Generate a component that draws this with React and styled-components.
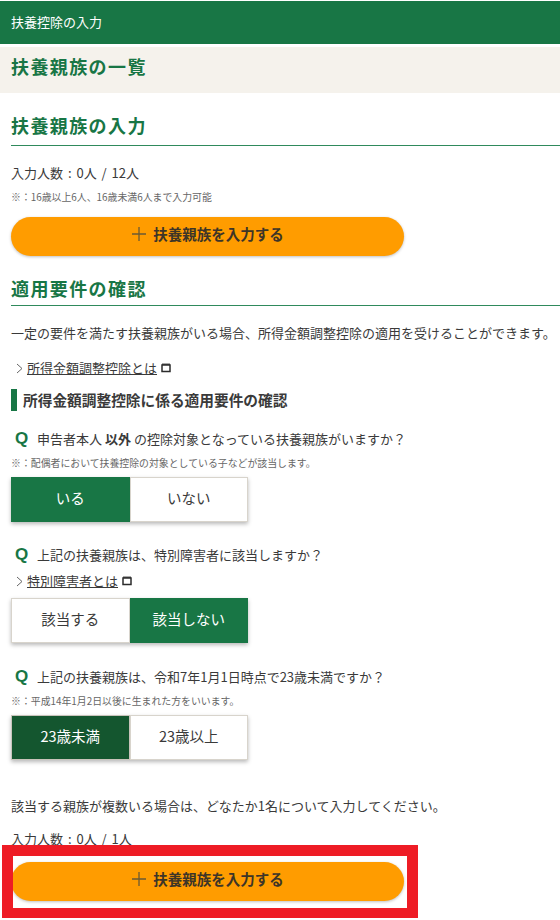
import React from 'react';
import styled, { createGlobalStyle } from 'styled-components';

const GREEN = '#187645';
const TEXT = '#3a3a3a';

const GlobalStyle = createGlobalStyle`
  html, body {
    margin: 0;
    padding: 0;
    background: #fff;
    overflow: hidden;
  }
  body {
    font-family: "Noto Sans CJK JP", "Noto Sans", sans-serif;
    color: ${TEXT};
  }
`;

const Page = styled.div`
  position: relative;
  width: 560px;
  height: 920px;
  overflow: hidden;
  padding-top: 1px;
  box-sizing: border-box;
`;

const TopBar = styled.header`
  height: 43px;
  background: ${GREEN};
  color: #fff;
  font-size: 13px;
  line-height: 41px;
  padding-left: 11px;
`;

const TitleBand = styled.div`
  margin-top: 3px;
  height: 46px;
  box-sizing: border-box;
  background: #f5f2ec;
  padding: 0 0 8px 11px;
  display: flex;
  align-items: center;
`;

const Title = styled.h1`
  margin: 0;
  font-size: 18px;
  letter-spacing: 1.4px;
  font-weight: 700;
  color: ${GREEN};
`;

const Content = styled.main`
  padding-left: 11px;
`;

const SectionHead = styled.h2`
  margin: ${(p) => p.$top}px 0 0;
  height: ${(p) => p.$height}px;
  box-sizing: border-box;
  border-bottom: 1px solid #2f8a5c;
  font-size: 18px;
  letter-spacing: 1.4px;
  line-height: 28px;
  font-weight: 700;
  color: ${GREEN};
`;

const Line = styled.p`
  margin: ${(p) => p.$top}px 0 0;
  font-size: 13px;
  line-height: 20px;
  white-space: nowrap;
`;

const Count = styled(Line)`
  word-spacing: 2px;
`;

const Note = styled.p`
  margin: ${(p) => p.$top}px 0 0;
  font-size: 9.9px;
  line-height: 13px;
  color: #666;
  white-space: nowrap;
`;

const AddButton = styled.button`
  display: flex;
  align-items: center;
  justify-content: center;
  gap: 6px;
  margin-top: ${(p) => p.$top}px;
  width: 393px;
  height: 39px;
  padding: 0 0 6px;
  border: none;
  border-radius: 20px;
  background: #ff9c00;
  color: #3d3528;
  font-family: inherit;
  font-size: 14.5px;
  font-weight: 700;
  box-shadow: 0 1px 3px rgba(0, 0, 0, 0.25);
`;

const LinkRow = styled.div`
  display: flex;
  align-items: center;
  gap: 4px;
  margin-top: ${(p) => p.$top}px;
  padding-left: 5px;
  font-size: 13px;
  line-height: 20px;
`;

const LinkText = styled.a`
  color: ${TEXT};
  text-decoration: underline;
`;

const SubHead = styled.h3`
  margin: 11px 0 0;
  height: 22px;
  border-left: 6px solid ${GREEN};
  padding-left: 6px;
  font-size: 14.7px;
  line-height: 22px;
  font-weight: 700;
  white-space: nowrap;
`;

const Question = styled.div`
  display: flex;
  align-items: center;
  margin-top: ${(p) => p.$top}px;
  padding-left: 4px;
  font-size: 13px;
  line-height: 20px;
  white-space: nowrap;
`;

const QMark = styled.span`
  width: 22px;
  font-family: "Liberation Sans", sans-serif;
  font-size: 17px;
  font-weight: 700;
  color: ${GREEN};
`;

const Strong = styled.strong`
  margin: 0 3px;
  font-weight: 700;
`;

const Toggle = styled.div`
  display: flex;
  width: 237px;
  height: 45px;
  margin-top: ${(p) => p.$top}px;
  box-shadow: 0 2px 4px rgba(0, 0, 0, 0.28);
`;

const Option = styled.button`
  flex: 1;
  padding: 0 0 4px;
  border: 1px solid ${(p) => (p.$state === 'on' ? GREEN : p.$state === 'focus' ? '#c9c4bb' : '#d8d4cc')};
  background: ${(p) => (p.$state === 'on' ? GREEN : p.$state === 'focus' ? '#14562f' : '#fff')};
  color: ${(p) => (p.$state === 'off' ? TEXT : '#fff')};
  font-family: inherit;
  font-size: 14.5px;
`;

const RedFrame = styled.div`
  position: absolute;
  left: 2px;
  top: 845px;
  width: 416px;
  height: 73px;
  box-sizing: border-box;
  border: solid #ee1c25;
  border-width: 11px 11px 10px;
  pointer-events: none;
`;

const Chevron = () => (
  <svg width="7" height="11" viewBox="0 0 7 11" fill="none" stroke="#666" strokeWidth="1">
    <path d="M1 1l5 4.5L1 10" />
  </svg>
);

const NewWindow = () => (
  <svg width="10" height="10" viewBox="0 0 10 10" fill="none" stroke="#2b2b2b">
    <rect x="1" y="2" width="8" height="6.5" strokeWidth="1.5" />
    <path d="M1 1.2h8" strokeWidth="1.2" />
  </svg>
);

const Plus = () => (
  <svg width="16" height="16" viewBox="0 0 16 16" stroke="#6b5a34" strokeWidth="1.3">
    <path d="M8 1v14M1 8h14" />
  </svg>
);

const Add = ({ top }) => (
  <AddButton $top={top}>
    <Plus />
    扶養親族を入力する
  </AddButton>
);

export default function App() {
  return (
    <Page>
      <GlobalStyle />
      <TopBar>扶養控除の入力</TopBar>
      <TitleBand>
        <Title>扶養親族の一覧</Title>
      </TitleBand>
      <Content>
        <SectionHead $top={18} $height={35}>扶養親族の入力</SectionHead>
        <Count $top={17}>入力人数 : 0人 / 12人</Count>
        <Note $top={8}>※：16歳以上6人、16歳未満6人まで入力可能</Note>
        <Add top={13} />
        <SectionHead $top={18} $height={32}>適用要件の確認</SectionHead>
        <Line $top={17}>一定の要件を満たす扶養親族がいる場合、所得金額調整控除の適用を受けることができます。</Line>
        <LinkRow $top={15}>
          <Chevron />
          <LinkText>所得金額調整控除とは</LinkText>
          <NewWindow />
        </LinkRow>
        <SubHead>所得金額調整控除に係る適用要件の確認</SubHead>
        <Question $top={18}>
          <QMark>Q</QMark>申告者本人<Strong>以外</Strong>の控除対象となっている扶養親族がいますか？
        </Question>
        <Note $top={8}>※：配偶者において扶養控除の対象としている子などが該当します。</Note>
        <Toggle $top={7}>
          <Option $state="on">いる</Option>
          <Option $state="off">いない</Option>
        </Toggle>
        <Question $top={23}>
          <QMark>Q</QMark>上記の扶養親族は、特別障害者に該当しますか？
        </Question>
        <LinkRow $top={6}>
          <Chevron />
          <LinkText>特別障害者とは</LinkText>
          <NewWindow />
        </LinkRow>
        <Toggle $top={7}>
          <Option $state="off">該当する</Option>
          <Option $state="on">該当しない</Option>
        </Toggle>
        <Question $top={24}>
          <QMark>Q</QMark>上記の扶養親族は、令和7年1月1日時点で23歳未満ですか？
        </Question>
        <Note $top={8}>※：平成14年1月2日以後に生まれた方をいいます。</Note>
        <Toggle $top={7}>
          <Option $state="focus">23歳未満</Option>
          <Option $state="off">23歳以上</Option>
        </Toggle>
        <Line $top={36}>該当する親族が複数いる場合は、どなたか1名について入力してください。</Line>
        <Count $top={13}>入力人数 : 0人 / 1人</Count>
        <Add top={13} />
      </Content>
      <RedFrame />
    </Page>
  );
}
